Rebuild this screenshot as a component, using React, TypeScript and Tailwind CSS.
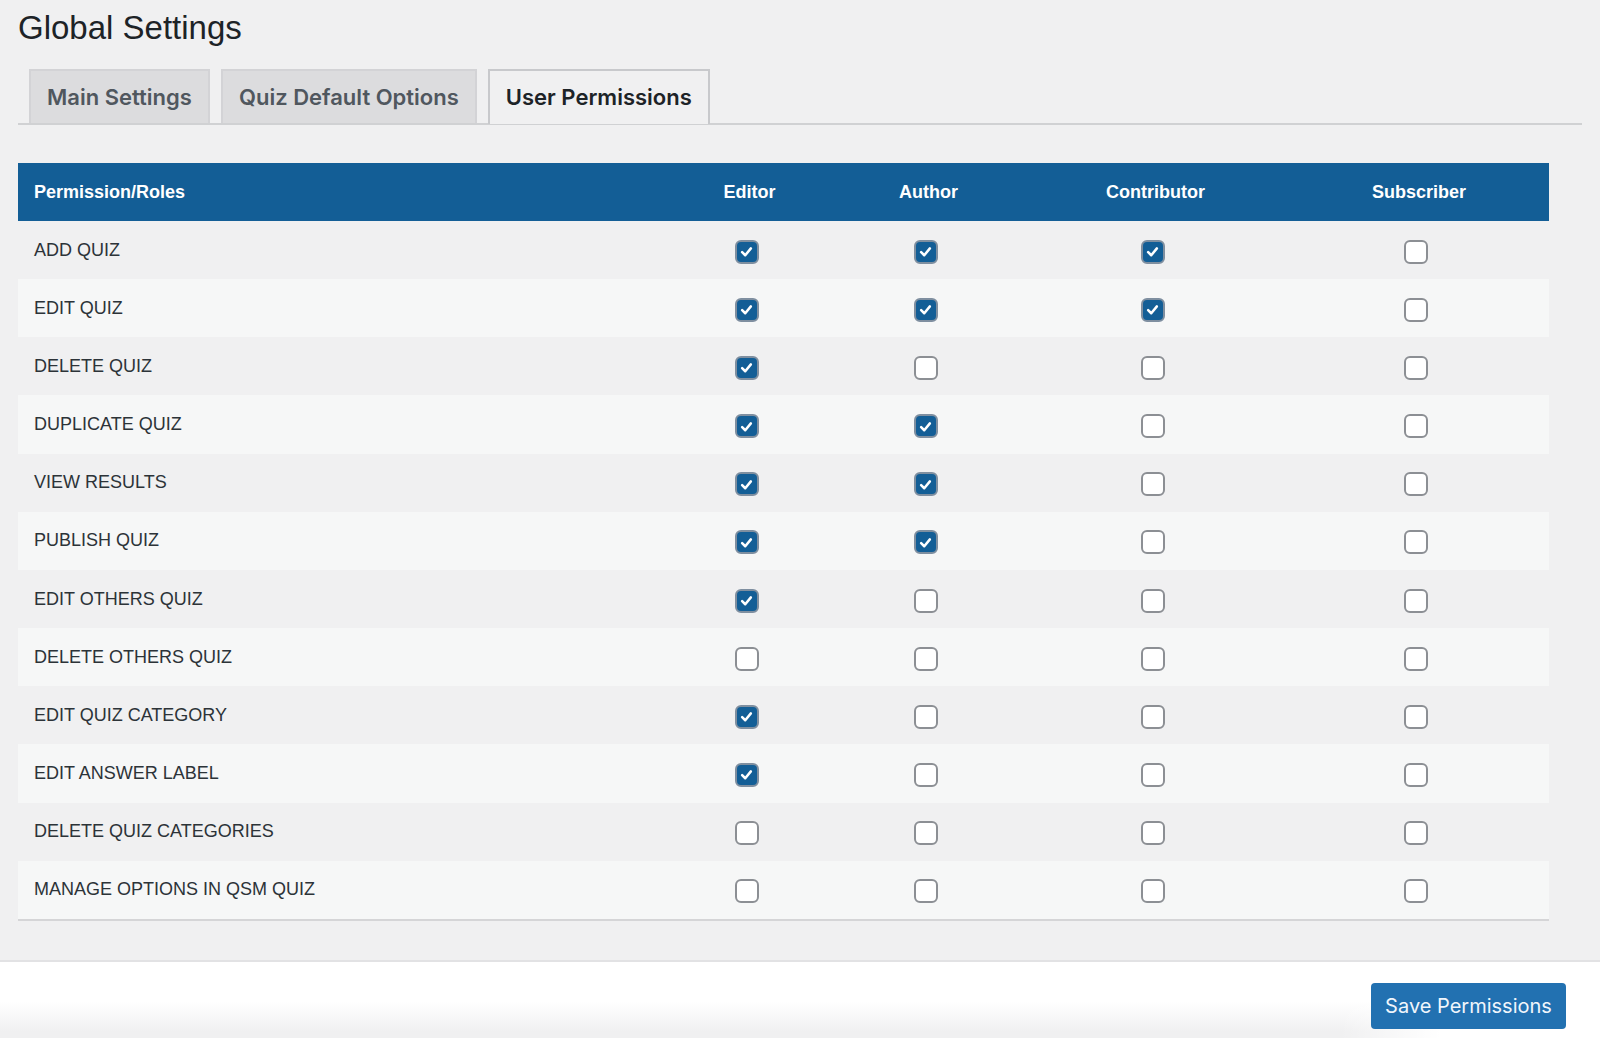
const rows: [string, boolean, boolean, boolean, boolean][] = [
  ['ADD QUIZ', true, true, true, false],
  ['EDIT QUIZ', true, true, true, false],
  ['DELETE QUIZ', true, false, false, false],
  ['DUPLICATE QUIZ', true, true, false, false],
  ['VIEW RESULTS', true, true, false, false],
  ['PUBLISH QUIZ', true, true, false, false],
  ['EDIT OTHERS QUIZ', true, false, false, false],
  ['DELETE OTHERS QUIZ', false, false, false, false],
  ['EDIT QUIZ CATEGORY', true, false, false, false],
  ['EDIT ANSWER LABEL', true, false, false, false],
  ['DELETE QUIZ CATEGORIES', false, false, false, false],
  ['MANAGE OPTIONS IN QSM QUIZ', false, false, false, false],
];

const roles = ['Editor', 'Author', 'Contributor', 'Subscriber'];
const gridCols = 'grid grid-cols-[646px_171px_187px_267px_260px] items-center';

function Checkbox({ checked }: { checked: boolean }) {
  if (checked) {
    return (
      <span className="mr-[6px] mt-[3px] inline-flex h-6 w-6 items-center justify-center rounded-[6px] border-2 border-[#7f8fa0] bg-[#135e96]">
        <svg viewBox="0 0 24 24" className="h-[15px] w-[15px]" fill="none" stroke="#fff" strokeWidth="4" strokeLinecap="round" strokeLinejoin="round">
          <path d="M5 13l5 5 9-11" />
        </svg>
      </span>
    );
  }
  return <span className="mr-[6px] mt-[3px] inline-block h-6 w-6 rounded-[6px] border-2 border-[#8c8f94] bg-white" />;
}

function Tab({ label, active }: { label: string; active?: boolean }) {
  return (
    <div
      className={
        active
          ? 'z-10 -mb-[2px] flex h-[55px] items-center border-2 border-b-0 border-[#c8c9cc] bg-[#f0f0f1] px-[16px] text-[22px] font-semibold text-[#1d2327]'
          : 'flex h-[54px] items-center border-2 border-b-0 border-[#d3d3d6] bg-[#dcdcde] px-[16px] text-[22px] font-semibold text-[#50575e]'
      }
    >
      {label}
    </div>
  );
}

export default function App() {
  return (
    <div className="flex h-[1038px] w-[1600px] flex-col overflow-hidden bg-[#f0f0f1] font-['Liberation_Sans',sans-serif]">
      <div className="h-[960px] pl-[18px] pr-[18px]">
        <h1 className="pt-[6px] text-[33px] leading-[44px] font-normal text-[#1d2327]">Global Settings</h1>

        <div className="mt-[19px] flex gap-[11px] border-b-2 border-[#d0d1d3] pl-[11px] font-['Inter',sans-serif]">
          <Tab label="Main Settings" />
          <Tab label="Quiz Default Options" />
          <Tab label="User Permissions" active />
        </div>

        <div className="mt-[38px] w-[1531px]">
          <div className={`${gridCols} h-[58px] bg-[#135e96] text-[18px] font-bold text-white`}>
            <div className="pl-[16px]">Permission/Roles</div>
            {roles.map((role) => (
              <div key={role} className="text-center">
                {role}
              </div>
            ))}
          </div>

          <div className="border-b-2 border-[#d5d5d7]">
            {rows.map(([name, ...values], i) => (
              <div key={name} className={`${gridCols} h-[58.16px] ${i % 2 === 1 ? 'bg-[#f6f7f7]' : 'bg-[#f0f0f1]'}`}>
                <div className="pl-[16px] text-[18px] text-[#2c3338]">{name}</div>
                {values.map((checked, j) => (
                  <div key={j} className="flex justify-center">
                    <Checkbox checked={checked} />
                  </div>
                ))}
              </div>
            ))}
          </div>
        </div>
      </div>

      <div className="flex h-[78px] items-start justify-end border-t-2 border-[#e2e2e4] bg-[linear-gradient(to_right,transparent_1340px,#fff_1440px),linear-gradient(to_bottom,#fff_40px,#f0f0f1_70px)] pr-[34px] pt-[21px]">
        <button className="h-[46px] w-[195px] rounded-[4px] bg-[#2271b1] font-['Inter',sans-serif] text-[20px] text-[#f0f6fc]">
          Save Permissions
        </button>
      </div>
    </div>
  );
}
